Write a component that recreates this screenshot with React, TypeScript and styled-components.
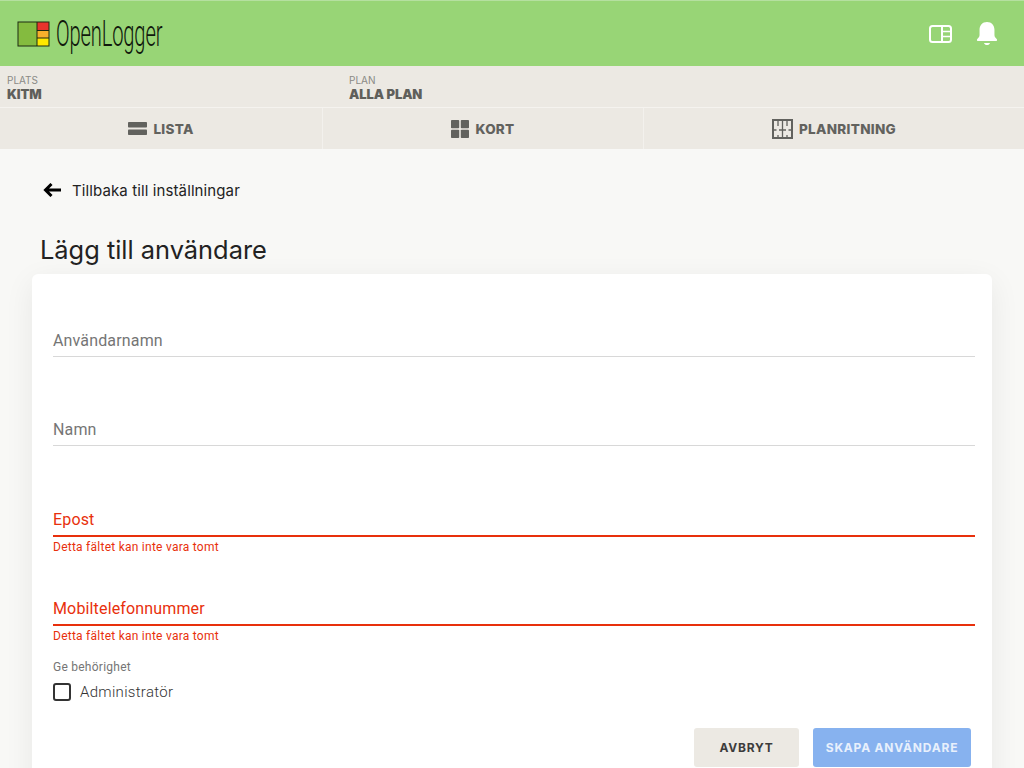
import React from "react";
import styled, { createGlobalStyle } from "styled-components";

const GlobalStyle = createGlobalStyle`
    html, body {
        margin: 0;
        padding: 0;
        height: 100%;
        overflow: hidden;
        background: #f8f8f6;
        font-family: "Inter", "Liberation Sans", sans-serif;
    }
    * {
        box-sizing: border-box;
    }
`;

const Page = styled.div`
    width: 1024px;
    height: 768px;
    overflow: hidden;
    display: flex;
    flex-direction: column;
`;

const Header = styled.header`
    height: 66px;
    flex: none;
    display: flex;
    align-items: center;
    justify-content: space-between;
    background: #98d576;
    border-top: 1px solid #b5e0a0;
    padding: 0 25px 0 17px;
`;

const Brand = styled.div`
    display: flex;
    align-items: center;
    gap: 6px;
`;

const BrandName = styled.span`
    display: inline-block;
    width: 105px;
    font-family: "Roboto", sans-serif;
    font-weight: 300;
    font-size: 37px;
    line-height: 40px;
    letter-spacing: -0.3px;
    color: #10180c;
    transform: scaleX(0.545);
    transform-origin: left center;
    white-space: nowrap;
`;

const HeaderIcons = styled.div`
    display: flex;
    align-items: center;
    gap: 23px;
`;

const InfoBar = styled.div`
    height: 41px;
    flex: none;
    display: grid;
    grid-template-columns: 342px 1fr;
    background: #ece9e3;
`;

const InfoCell = styled.div`
    padding: 8px 7px 0;
    display: flex;
    flex-direction: column;
`;

const InfoLabel = styled.span`
    font-size: 10px;
    line-height: 12px;
    color: #8a8a86;
`;

const InfoValue = styled.span`
    margin-top: 1px;
    font-size: 13px;
    line-height: 15px;
    font-weight: 900;
    letter-spacing: -0.1px;
    color: #5f5f5b;
`;

const Tabs = styled.nav`
    height: 42px;
    flex: none;
    display: grid;
    grid-template-columns: 323px 321px 1fr;
    background: #ece9e3;
    border-top: 1px solid #f5f3ef;
`;

const Tab = styled.div`
    display: flex;
    align-items: center;
    justify-content: center;
    gap: 6px;
    font-size: 13.5px;
    line-height: 40px;
    font-weight: 800;
    letter-spacing: 0.3px;
    color: #62625e;
    border-right: 1px solid #f3f1ed;
    &:last-child {
        border-right: 0;
    }
`;

const Content = styled.main`
    flex: 1;
    padding: 0 32px;
`;

const BackLink = styled.a`
    display: flex;
    align-items: center;
    gap: 11px;
    margin: 31px 0 0 11px;
    height: 20px;
    font-size: 15px;
    letter-spacing: 0.11px;
    color: #222;
`;

const Title = styled.h1`
    margin: 34px 0 8px 8px;
    font-size: 25.4px;
    line-height: 32px;
    font-weight: 400;
    color: #222;
`;

const Card = styled.section`
    background: #fff;
    border-radius: 6px;
    box-shadow: 0 8px 30px rgba(0, 0, 0, 0.07);
    padding: 0 17px 0 21px;
    height: 560px;
`;

const Field = styled.div<{ $error?: boolean }>`
    height: 89px;
    padding-top: 50px;
    color: ${({ $error }) => ($error ? "#e8300c" : "#757575")};
`;

const FieldLabel = styled.label<{ $error?: boolean }>`
    display: block;
    height: ${({ $error }) => ($error ? "35px" : "33px")};
    font-family: "Roboto", sans-serif;
    font-size: 16px;
    line-height: ${({ $error }) => ($error ? "36px" : "34px")};
    letter-spacing: 0.15px;
    border-bottom: ${({ $error }) => ($error ? "2px solid #e8300c" : "1px solid #d8d8d8")};
`;

const HelperText = styled.div`
    margin-top: 3px;
    font-family: "Roboto", sans-serif;
    font-size: 12px;
    line-height: 14px;
    letter-spacing: 0.25px;
    color: #e8300c;
`;

const PermissionLabel = styled.div`
    margin-top: 30px;
    font-family: "Roboto", sans-serif;
    font-size: 12px;
    line-height: 14px;
    letter-spacing: 0.25px;
    color: #757575;
`;

const CheckRow = styled.label`
    display: flex;
    align-items: center;
    gap: 9px;
    margin-top: 9px;
    font-family: "Roboto", sans-serif;
    font-size: 15px;
    font-weight: 300;
    letter-spacing: 0.3px;
    color: #333;
`;

const CheckBox = styled.span`
    width: 18px;
    height: 18px;
    border: 2px solid #333;
    border-radius: 3px;
`;

const Actions = styled.div`
    display: flex;
    justify-content: flex-end;
    gap: 14px;
    margin-top: 27px;
    padding-right: 4px;
`;

const Button = styled.button<{ $primary?: boolean }>`
    height: 39px;
    width: ${({ $primary }) => ($primary ? "158px" : "105px")};
    border: 0;
    border-radius: 3px;
    font-family: "Inter", sans-serif;
    font-size: 12px;
    font-weight: 700;
    letter-spacing: 0.8px;
    background: ${({ $primary }) => ($primary ? "#87b2ef" : "#ece9e3")};
    color: ${({ $primary }) => ($primary ? "#e8f0fc" : "#3c3c3c")};
`;

const LogoIcon = () => (
    <svg width="33" height="26" viewBox="0 0 33 26">
        <rect x="0.5" y="0.5" width="32" height="25" fill="#1d2a12" />
        <rect x="1.5" y="1.5" width="18" height="23" fill="#84bb3f" />
        <rect x="20.5" y="1.5" width="11" height="7.5" fill="#e8352c" />
        <rect x="20.5" y="10" width="11" height="6.5" fill="#f7b02c" />
        <rect x="20.5" y="17.5" width="11" height="7" fill="#ffe800" />
    </svg>
);

const PanelIcon = () => (
    <svg width="23" height="18" viewBox="0 0 23 18" fill="none">
        <rect x="1" y="1" width="21" height="16" rx="2.5" stroke="#fff" strokeWidth="2" />
        <path d="M13 1v16" stroke="#fff" strokeWidth="2" />
        <path d="M13 6.500h9M13 11.500h9" stroke="#fff" strokeWidth="1.500" />
    </svg>
);

const BellIcon = () => (
    <svg width="24" height="24" viewBox="2 1 20 23.500" fill="#fff">
        <path d="M12 1c-4.600 0-7.300 3.400-7.300 7.600v5.200c0 1.600-1 2.700-2.200 3.800-.7.7-.4 2.100.8 2.100h17.400c1.200 0 1.500-1.400.8-2.100-1.200-1.100-2.200-2.200-2.200-3.800V8.600C19.300 4.400 16.600 1 12 1z" />
        <path d="M9 21.500h6c-.4 1.200-1.600 2-3 2s-2.600-.8-3-2z" />
    </svg>
);

const ListIcon = () => (
    <svg width="19" height="13" viewBox="0 0 19 13" fill="#62625e">
        <rect width="19" height="5.500" rx="0.800" />
        <rect y="7.500" width="19" height="5.500" rx="0.800" />
    </svg>
);

const GridIcon = () => (
    <svg width="18" height="18" viewBox="0 0 18 18" fill="#62625e">
        <rect width="8.200" height="8.200" rx="0.800" />
        <rect x="9.800" width="8.200" height="8.200" rx="0.800" />
        <rect y="9.800" width="8.200" height="8.200" rx="0.800" />
        <rect x="9.800" y="9.800" width="8.200" height="8.200" rx="0.800" />
    </svg>
);

const FloorIcon = () => (
    <svg width="21" height="20" viewBox="0 0 21 20" fill="none" stroke="#62625e">
        <rect x="1" y="1" width="19" height="18" strokeWidth="2" />
        <path d="M10.500 2v16M6 2v5M15 2v5M6 16v2M15 16v2" strokeWidth="1.300" />
        <path d="M2 11h2.500M7 11h7M16.500 11H19" strokeWidth="1.500" />
    </svg>
);

const BackArrow = () => (
    <svg width="18" height="14" viewBox="0 0 18 14" fill="none" stroke="#000" strokeWidth="3">
        <path d="M18 7H3M8.500 1 2.500 7l6 6" />
    </svg>
);

export default function App() {
    return (
        <Page>
            <GlobalStyle />
            <Header>
                <Brand>
                    <LogoIcon />
                    <BrandName>OpenLogger</BrandName>
                </Brand>
                <HeaderIcons>
                    <PanelIcon />
                    <BellIcon />
                </HeaderIcons>
            </Header>
            <InfoBar>
                <InfoCell>
                    <InfoLabel>PLATS</InfoLabel>
                    <InfoValue>KITM</InfoValue>
                </InfoCell>
                <InfoCell>
                    <InfoLabel>PLAN</InfoLabel>
                    <InfoValue>ALLA PLAN</InfoValue>
                </InfoCell>
            </InfoBar>
            <Tabs>
                <Tab><ListIcon />LISTA</Tab>
                <Tab><GridIcon />KORT</Tab>
                <Tab><FloorIcon />PLANRITNING</Tab>
            </Tabs>
            <Content>
                <BackLink><BackArrow />Tillbaka till inställningar</BackLink>
                <Title>Lägg till användare</Title>
                <Card>
                    <Field>
                        <FieldLabel>Användarnamn</FieldLabel>
                    </Field>
                    <Field>
                        <FieldLabel>Namn</FieldLabel>
                    </Field>
                    <Field $error>
                        <FieldLabel $error>Epost</FieldLabel>
                        <HelperText>Detta fältet kan inte vara tomt</HelperText>
                    </Field>
                    <Field $error>
                        <FieldLabel $error>Mobiltelefonnummer</FieldLabel>
                        <HelperText>Detta fältet kan inte vara tomt</HelperText>
                    </Field>
                    <PermissionLabel>Ge behörighet</PermissionLabel>
                    <CheckRow><CheckBox />Administratör</CheckRow>
                    <Actions>
                        <Button>AVBRYT</Button>
                        <Button $primary>SKAPA ANVÄNDARE</Button>
                    </Actions>
                </Card>
            </Content>
        </Page>
    );
}
